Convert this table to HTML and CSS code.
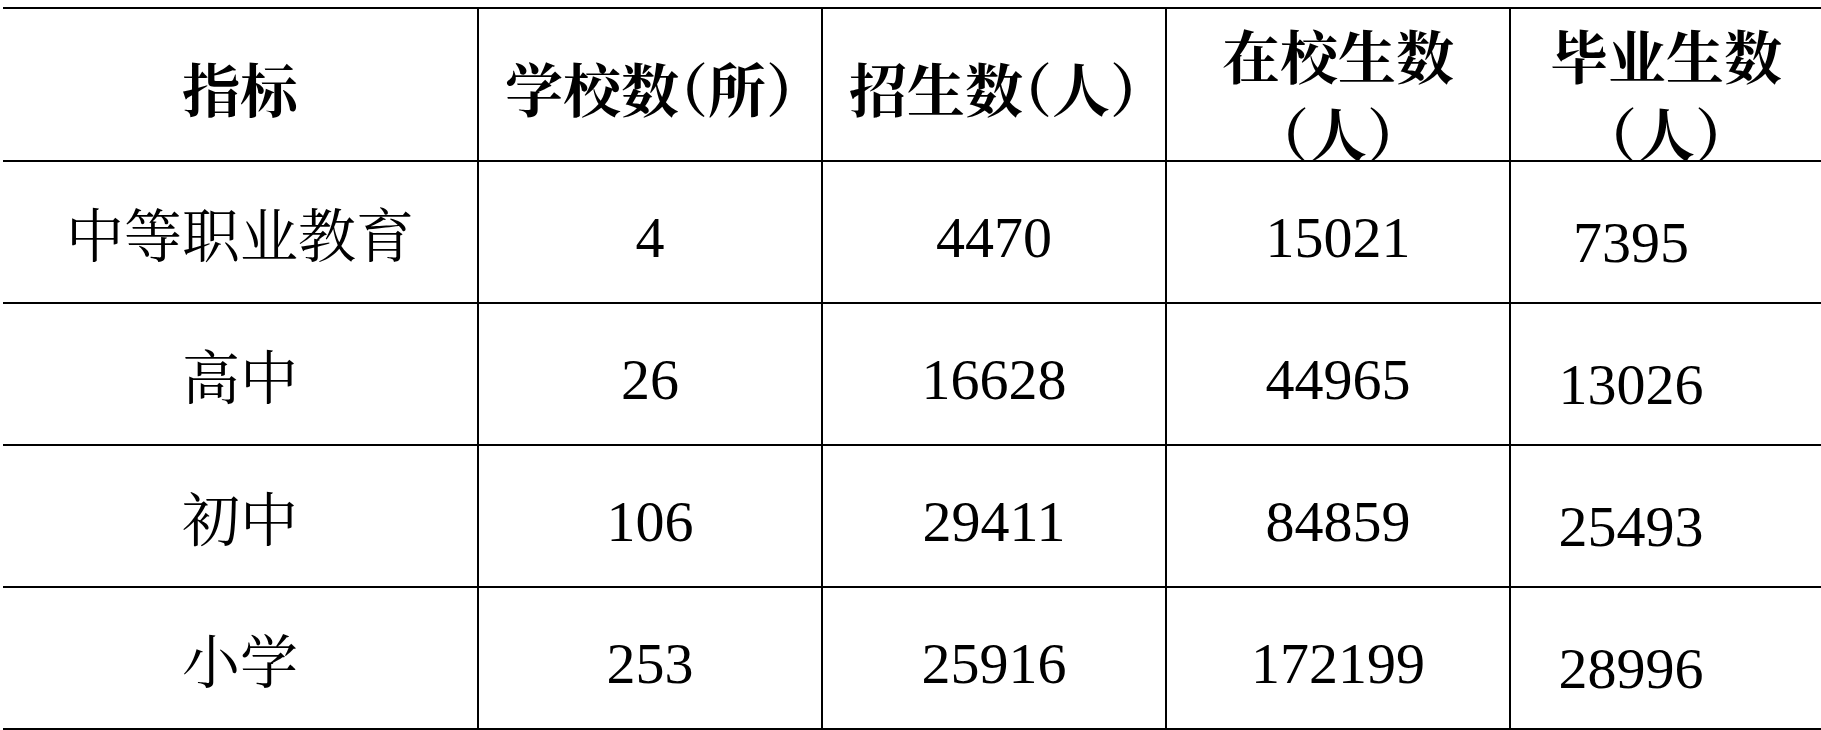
FILE: index.html
```html
<!DOCTYPE html>
<html lang="zh-CN">
<head>
<meta charset="utf-8">
<title>教育统计</title>
<link rel="stylesheet" href="styles.css">
</head>
<body>
<div class="table">
  <div class="cell th">指标</div>
  <div class="cell th">学校数（所）</div>
  <div class="cell th">招生数（人）</div>
  <div class="cell th wrap">在校生数（人）</div>
  <div class="cell th wrap">毕业生数（人）</div>

  <div class="cell td">中等职业教育</div>
  <div class="cell td num">4</div>
  <div class="cell td num">4470</div>
  <div class="cell td num">15021</div>
  <div class="cell td num last">7395</div>

  <div class="cell td">高中</div>
  <div class="cell td num">26</div>
  <div class="cell td num">16628</div>
  <div class="cell td num">44965</div>
  <div class="cell td num last">13026</div>

  <div class="cell td">初中</div>
  <div class="cell td num">106</div>
  <div class="cell td num">29411</div>
  <div class="cell td num">84859</div>
  <div class="cell td num last">25493</div>

  <div class="cell td">小学</div>
  <div class="cell td num">253</div>
  <div class="cell td num">25916</div>
  <div class="cell td num">172199</div>
  <div class="cell td num last">28996</div>
</div>
</body>
</html>
```

FILE: styles.css
```css
html, body {
  margin: 0;
  padding: 0;
  background: #fff;
}

body {
  width: 1821px;
  height: 730px;
  overflow: hidden;
  font-family: "Liberation Serif", "Noto Serif CJK SC", "Noto Sans CJK SC", serif;
  color: #000;
}

.table {
  display: grid;
  grid-template-columns: 474px 342px 342px 342px 310px;
  grid-template-rows: 151px 140px 140px 140px 140px;
  gap: 2px;
  background: #000;
  border-top: 2px solid #000;
  border-bottom: 2px solid #000;
  margin: 7px 0 0 3px;
  width: max-content;
}

.cell {
  background: #fff;
  overflow: hidden;
  display: flex;
  justify-content: center;
  align-items: center;
  text-align: center;
  font-size: 58px;
  line-height: 78px;
  box-sizing: border-box;
}

.th {
  font-family: "Noto Serif CJK SC", "Noto Sans CJK SC", sans-serif;
  font-weight: 700;
  font-feature-settings: "halt";
  padding-top: 5px;
}

.th.wrap {
  align-items: flex-start;
  padding-top: 6px;
}

.td {
  padding-top: 12px;
  font-family: "Liberation Serif", "Noto Serif CJK SC", "Noto Sans CJK SC", serif;
}

.td.last {
  padding-right: 70px;
  padding-top: 22px;
}
```
